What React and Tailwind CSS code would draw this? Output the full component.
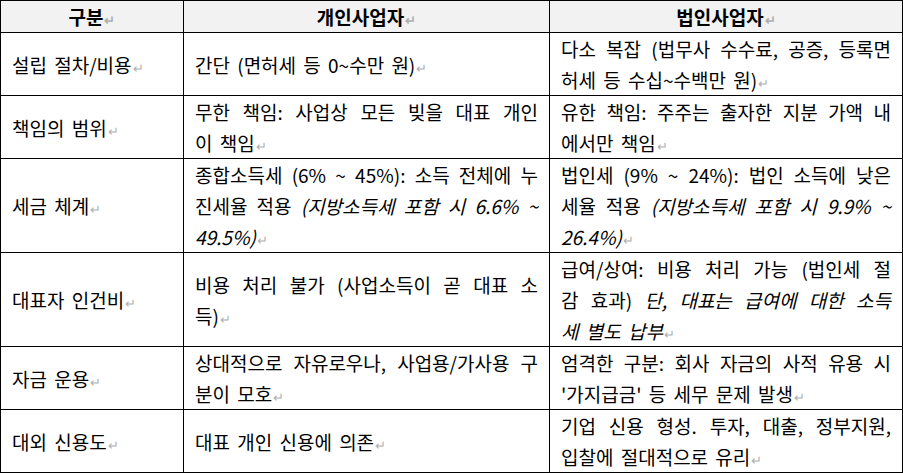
import * as React from 'react';

// each cell = list of lines, each line = list of segments ("text" or { i: "italic text" })
const rows = [
    {
        label: '설립 절차/비용',
        personal: [['간단 (면허세 등 0~수만 원)']],
        corporate: [['다소 복잡 (법무사 수수료, 공증, 등록면'], ['허세 등 수십~수백만 원)']],
    },
    {
        label: '책임의 범위',
        personal: [['무한 책임: 사업상 모든 빚을 대표 개인'], ['이 책임']],
        corporate: [['유한 책임: 주주는 출자한 지분 가액 내'], ['에서만 책임']],
    },
    {
        label: '세금 체계',
        personal: [
            ['종합소득세 (6% ~ 45%): 소득 전체에 누'],
            ['진세율 적용 ', { i: '(지방소득세 포함 시 6.6% ~' }],
            [{ i: '49.5%)' }],
        ],
        corporate: [
            ['법인세 (9% ~ 24%): 법인 소득에 낮은'],
            ['세율 적용 ', { i: '(지방소득세 포함 시 9.9% ~' }],
            [{ i: '26.4%)' }],
        ],
    },
    {
        label: '대표자 인건비',
        personal: [['비용 처리 불가 (사업소득이 곧 대표 소'], ['득)']],
        corporate: [
            ['급여/상여: 비용 처리 가능 (법인세 절'],
            ['감 효과) ', { i: '단, 대표는 급여에 대한 소득' }],
            [{ i: '세 별도 납부' }],
        ],
    },
    {
        label: '자금 운용',
        personal: [['상대적으로 자유로우나, 사업용/가사용 구'], ['분이 모호']],
        corporate: [['엄격한 구분: 회사 자금의 사적 유용 시'], ["'가지급금' 등 세무 문제 발생"]],
    },
    {
        label: '대외 신용도',
        personal: [['대표 개인 신용에 의존']],
        corporate: [['기업 신용 형성. 투자, 대출, 정부지원,'], ['입찰에 절대적으로 유리']],
    },
];

const Mark = () => (
    <span className="text-[13px] leading-none text-[#b0b0b0] ml-[1px] not-italic [word-spacing:0]">↵</span>
);

function Cell({ lines }) {
    return (
        <td className="border border-black px-[11px] py-0 align-middle">
            {lines.map((line, i) => {
                const last = i === lines.length - 1;
                return (
                    <div
                        key={i}
                        className={
                            last
                                ? 'text-left whitespace-nowrap [word-spacing:3px]'
                                : 'text-justify [text-align-last:justify] whitespace-nowrap'
                        }
                    >
                        {line.map((seg, j) =>
                            typeof seg === 'string' ? (
                                <span key={j}>{seg}</span>
                            ) : (
                                <em key={j} className="italic">{seg.i}</em>
                            )
                        )}
                        {last && <Mark />}
                    </div>
                );
            })}
        </td>
    );
}

export default function App() {
    return (
        <div className="bg-white w-[903px] h-[475px] overflow-hidden">
            <table
                className="table-fixed border-collapse w-[902px] text-[19px] leading-[31px] text-black"
                style={{ fontFamily: "'Noto Sans CJK KR', 'Noto Sans', sans-serif" }}
            >
                <colgroup>
                    <col className="w-[183px]" />
                    <col className="w-[366px]" />
                    <col className="w-[353px]" />
                </colgroup>
                <thead>
                    <tr className="bg-[#f2f2f2]">
                        <th className="border border-black font-bold text-center py-0">구분<Mark /></th>
                        <th className="border border-black font-bold text-center py-0">개인사업자<Mark /></th>
                        <th className="border border-black font-bold text-center py-0">법인사업자<Mark /></th>
                    </tr>
                </thead>
                <tbody>
                    {rows.map((row) => (
                        <tr key={row.label}>
                            <td className="border border-black px-[11px] py-0 align-middle text-left whitespace-nowrap [word-spacing:3px]">
                                {row.label}<Mark />
                            </td>
                            <Cell lines={row.personal} />
                            <Cell lines={row.corporate} />
                        </tr>
                    ))}
                </tbody>
            </table>
        </div>
    );
}
